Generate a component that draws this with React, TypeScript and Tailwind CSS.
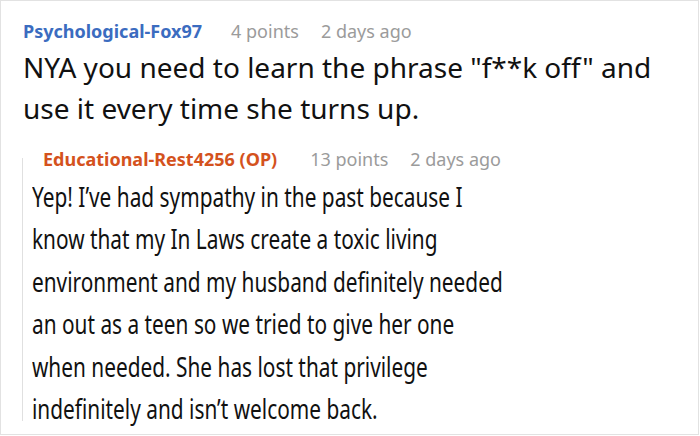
import React from "react";

const Meta = ({ name, points, color, gap }: { name: string; points: string; color: string; gap: string }) => (
  <div className="flex items-baseline text-[18px] leading-[24px] whitespace-nowrap">
    <span className={`font-bold ${color}`}>{name}</span>
    <span className={`${gap} text-[#9b9b9b]`}>{points}</span>
    <span className="ml-[22px] text-[#9b9b9b]">2 days ago</span>
  </div>
);

const App = () => {
  return (
    <div className="w-[699px] h-[435px] overflow-hidden border border-[#e2e2e2] bg-white font-['Noto_Sans',sans-serif] text-[#111]">
      <div className="pl-[22px] pt-[18px]">
        <Meta name="Psychological-Fox97" points="4 points" color="text-[#3b6cc0]" gap="ml-[29px]" />
        <p className="mt-[4px] text-[28px] leading-[41px]">
          NYA you need to learn the phrase "f**k off" and
          <br />
          use it every time she turns up.
        </p>
      </div>

      <div className="flex ml-[21px] mt-[18px]">
        <div className="w-px bg-[#e0e0e0] mt-[11px] mb-[8px] shrink-0" />
        <div className="ml-[9px]">
          <div className="pl-[11px]">
            <Meta name="Educational-Rest4256 (OP)" points="13 points" color="text-[#d4521d]" gap="ml-[33px]" />
          </div>
          <p className="mt-[4px] text-[28px] leading-[42.4px] whitespace-nowrap scale-x-[0.744] origin-left">
            Yep! I’ve had sympathy in the past because I
            <br />
            know that my In Laws create a toxic living
            <br />
            environment and my husband definitely needed
            <br />
            an out as a teen so we tried to give her one
            <br />
            when needed. She has lost that privilege
            <br />
            indefinitely and isn’t welcome back.
          </p>
        </div>
      </div>
    </div>
  );
};

export default App;
